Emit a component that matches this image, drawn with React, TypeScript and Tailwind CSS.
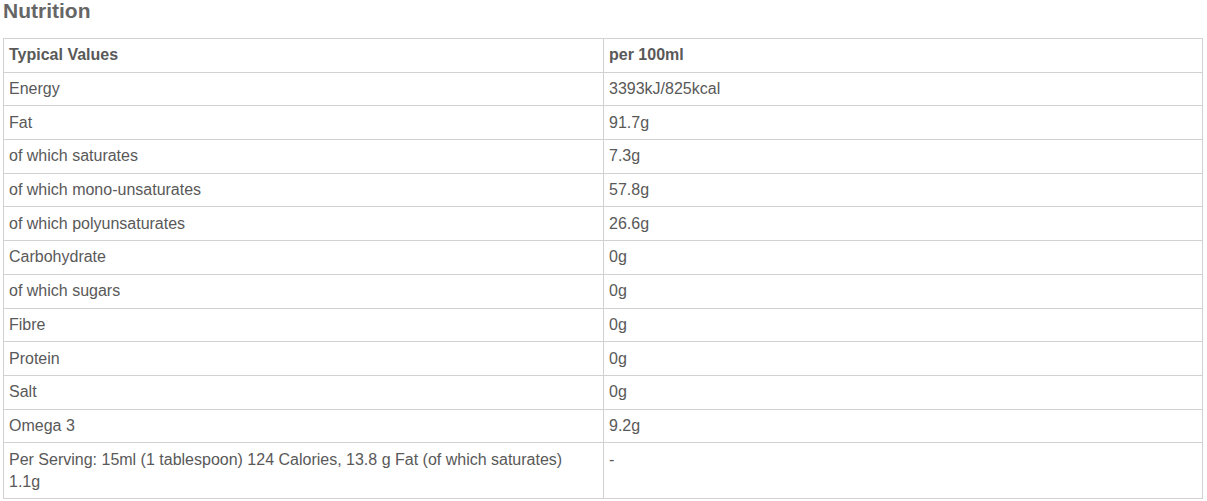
import React from "react";

const rows: [string, React.ReactNode][] = [
  ["Energy", "3393kJ/825kcal"],
  ["Fat", "91.7g"],
  ["of which saturates", "7.3g"],
  ["of which mono-unsaturates", "57.8g"],
  ["of which polyunsaturates", "26.6g"],
  ["Carbohydrate", "0g"],
  ["of which sugars", "0g"],
  ["Fibre", "0g"],
  ["Protein", "0g"],
  ["Salt", "0g"],
  ["Omega 3", "9.2g"],
];

export default function App() {
  return (
    <div
      className="bg-white w-[1207px] h-[501px] overflow-hidden text-[#595959]"
      style={{ fontFamily: '"Liberation Sans", Arial, sans-serif' }}
    >
      <h2 className="text-[21px] leading-[21px] font-bold text-[#666] pl-[3px]">Nutrition</h2>
      <table className="ml-[3px] mt-[17px] w-[1200px] border-collapse table-fixed text-[16px] leading-[22px]">
        <tbody>
          <tr>
            <td className="w-[600px] border border-[#d2d2d2] px-[5px] py-[5.35px] align-top font-bold">Typical Values</td>
            <td className="border border-[#d2d2d2] px-[5px] py-[5.35px] align-top font-bold">per 100ml</td>
          </tr>
          {rows.map(([a, b]) => (
            <tr key={a}>
              <td className="border border-[#d2d2d2] px-[5px] py-[5.35px] align-top">{a}</td>
              <td className="border border-[#d2d2d2] px-[5px] py-[5.35px] align-top">{b}</td>
            </tr>
          ))}
          <tr>
            <td className="border border-[#d2d2d2] px-[5px] py-[5.35px] align-top">
              Per Serving: 15ml (1 tablespoon) 124 Calories, 13.8 g Fat (of which saturates)
              <br />
              1.1g
            </td>
            <td className="border border-[#d2d2d2] px-[5px] py-[5.35px] align-top">-</td>
          </tr>
        </tbody>
      </table>
    </div>
  );
}
